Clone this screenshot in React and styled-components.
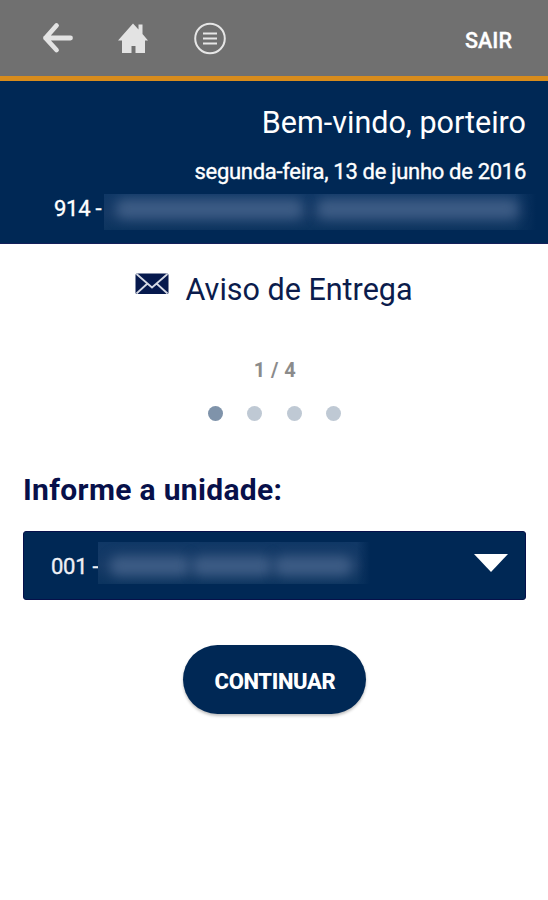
import React, { useState } from 'react';
import styled, { createGlobalStyle } from 'styled-components';

const GlobalStyle = createGlobalStyle`
  * {
    box-sizing: border-box;
  }

  body {
    margin: 0;
    background: #ffffff;
    font-family: Roboto, 'Liberation Sans', sans-serif;
  }

  button {
    border: none;
    padding: 0;
    background: none;
    font-family: inherit;
    cursor: pointer;
  }
`;

const Screen = styled.div`
  width: 548px;
  height: 900px;
  overflow: hidden;
  background: #ffffff;
`;

const TopBar = styled.header`
  display: flex;
  align-items: center;
  justify-content: space-between;
  height: 81px;
  padding: 0 36px 0 42px;
  background: #707070;
  border-bottom: 5px solid #d88c1c;
`;

const NavIcons = styled.nav`
  display: flex;
  align-items: center;
`;

const IconButton = styled.button`
  display: flex;
  margin-right: ${({ $gap }) => $gap || 0}px;
`;

const LogoutButton = styled.button`
  margin-top: 5px;
  color: #ffffff;
  font-size: 21.5px;
  line-height: 26px;
  font-weight: 500;
  -webkit-text-stroke: 0.3px currentColor;
`;

const Welcome = styled.section`
  display: flex;
  flex-direction: column;
  align-items: flex-end;
  height: 163px;
  padding: 23px 22px 0 54px;
  background: #002855;
  border-bottom: 1px solid #14205a;
  color: #ffffff;
`;

const Greeting = styled.h1`
  margin: 0;
  font-size: 30.5px;
  line-height: 38px;
  font-weight: 400;
`;

const Today = styled.p`
  margin: 17px 0 0;
  font-size: 22px;
  line-height: 26px;
  letter-spacing: -0.3px;
  -webkit-text-stroke: 0.35px currentColor;
`;

const Building = styled.div`
  display: flex;
  align-items: center;
  align-self: flex-start;
  margin-top: 9px;
  height: 36px;
  font-size: 22px;
`;

const Code = styled.span`
  flex: none;
  width: ${({ $width }) => $width}px;
  margin-top: ${({ $drop }) => $drop || 0}px;
  text-align: left;
  white-space: nowrap;
  letter-spacing: -0.25px;
  line-height: 26px;
  -webkit-text-stroke: 0.35px currentColor;
`;

const HiddenName = styled.span`
  display: flex;
  flex: none;
  align-items: flex-start;
  gap: ${({ $gap }) => $gap}px;
  width: ${({ $width }) => $width}px;
  height: ${({ $height }) => $height}px;
  margin-bottom: ${({ $lift }) => $lift || 0}px;
  padding: ${({ $top }) => $top}px 18px 0 12px;
  overflow: hidden;
  background: linear-gradient(to right, transparent 95%, #002855),
    linear-gradient(#103866, #163a66 55%, #0c345f);
`;

const Smudge = styled.span`
  flex: ${({ $grow }) => $grow};
  height: 20px;
  border-radius: 8px;
  background: #3d5c85;
  filter: blur(6px);
`;

const Content = styled.main`
  display: flex;
  flex-direction: column;
  align-items: center;
  padding: 0 22px 0 23px;
`;

const PageTitle = styled.h2`
  display: flex;
  align-items: flex-start;
  gap: 16px;
  margin: 27px 1px 0 0;
  color: #0b1c4c;
  font-size: 30.5px;
  line-height: 38px;
  font-weight: 400;

  svg {
    margin-top: 2px;
  }
`;

const StepCount = styled.div`
  margin: 48px 0 0 1px;
  color: #8b8b8b;
  font-size: 20px;
  line-height: 26px;
  letter-spacing: 0.4px;
  font-weight: 700;
`;

const Dots = styled.div`
  display: flex;
  gap: 24.5px;
  margin-top: 23px;
`;

const Dot = styled.span`
  width: 15px;
  height: 15px;
  border-radius: 50%;
  background: ${({ $active }) => ($active ? '#7f93aa' : '#bfc9d4')};
`;

const Label = styled.h3`
  align-self: flex-start;
  margin: 50px 0 0;
  color: #07104a;
  font-size: 30px;
  line-height: 38px;
  letter-spacing: 0.33px;
  font-weight: 700;
`;

const Select = styled.button`
  display: flex;
  align-items: center;
  width: 503px;
  height: 69px;
  margin-top: 22px;
  padding: 0 17px 0 27px;
  border: 1px solid #06104a;
  border-radius: 3px;
  background: #002855;
  color: #f0f0f5;
  font-size: 22px;
`;

const Caret = styled.svg`
  margin: -6px 0 0 auto;
`;

const ContinueButton = styled.button`
  width: 183px;
  height: 69px;
  margin-top: 45px;
  padding: 3px 0 0 1px;
  border-radius: 35px;
  background: #002855;
  box-shadow: 0 2px 3px rgba(0, 0, 0, 0.25);
  color: #ffffff;
  font-size: 22px;
  letter-spacing: -0.35px;
  font-weight: 800;
`;

const BackIcon = () => (
  <svg width="32" height="32" viewBox="0 0 32 32" fill="none">
    <path
      d="M14.5 3.5 L3.5 16 L14.5 28 M3.5 16 H28.5"
      stroke="#e3e3e3"
      strokeWidth="4.8"
      strokeLinecap="round"
      strokeLinejoin="round"
    />
  </svg>
);

const HomeIcon = () => (
  <svg width="32" height="32" viewBox="0 0 32 32" fill="#e3e3e3">
    <path d="M16 1.5 L21.5 7.5 V2.5 H25.5 V12 L31 18.5 H28 V31 H18.5 V24 H14.5 V31 H5 V18.5 H1 Z" />
  </svg>
);

const MenuIcon = () => (
  <svg width="34" height="34" viewBox="0 0 34 34" fill="none" stroke="#e6e6e6">
    <circle cx="17" cy="17.5" r="14.8" strokeWidth="2" />
    <path d="M10 12.5 H24 M10 17.5 H24 M10 22.5 H24" strokeWidth="2" />
  </svg>
);

const MailIcon = () => (
  <svg width="34" height="22" viewBox="0 0 34 22" fill="none">
    <rect x="0.5" y="0.5" width="33" height="20.5" rx="1.5" fill="#06194d" />
    <path
      d="M1.5 1 L17 14.5 L32.5 1 M1.5 20.5 L12.5 10.5 M32.5 20.5 L21.5 10.5"
      stroke="#d5d9e4"
      strokeWidth="1.8"
    />
  </svg>
);

const TOTAL_STEPS = 4;

const App = () => {
  const [step, setStep] = useState(1);

  return (
    <>
      <GlobalStyle />
      <Screen>
        <TopBar>
          <NavIcons>
            <IconButton $gap={43} aria-label="Voltar">
              <BackIcon />
            </IconButton>
            <IconButton $gap={44} aria-label="Início">
              <HomeIcon />
            </IconButton>
            <IconButton aria-label="Menu">
              <MenuIcon />
            </IconButton>
          </NavIcons>
          <LogoutButton>SAIR</LogoutButton>
        </TopBar>

        <Welcome>
          <Greeting>Bem-vindo, porteiro</Greeting>
          <Today>segunda-feira, 13 de junho de 2016</Today>
          <Building>
            <Code $width={50} $drop={-7}>914 -</Code>
            <HiddenName $width={432} $height={36} $gap={14} $top={5}>
              <Smudge $grow={186} />
              <Smudge $grow={200} />
            </HiddenName>
          </Building>
        </Welcome>

        <Content>
          <PageTitle>
            <MailIcon />
            Aviso de Entrega
          </PageTitle>
          <StepCount>
            {step} / {TOTAL_STEPS}
          </StepCount>
          <Dots>
            {Array.from({ length: TOTAL_STEPS }, (_, i) => (
              <Dot key={i} $active={i + 1 === step} />
            ))}
          </Dots>

          <Label>Informe a unidade:</Label>
          <Select>
            <Code $width={47} $drop={2}>001 -</Code>
            <HiddenName $width={272} $height={42} $gap={2} $top={14} $lift={5}>
              <Smudge $grow={76} />
              <Smudge $grow={76} />
              <Smudge $grow={74} />
            </HiddenName>
            <Caret width="34" height="18" viewBox="0 0 34 18">
              <path d="M0 0 H34 L17 18 Z" fill="#ffffff" />
            </Caret>
          </Select>
          <ContinueButton onClick={() => setStep(Math.min(step + 1, TOTAL_STEPS))}>
            CONTINUAR
          </ContinueButton>
        </Content>
      </Screen>
    </>
  );
};

export default App;
